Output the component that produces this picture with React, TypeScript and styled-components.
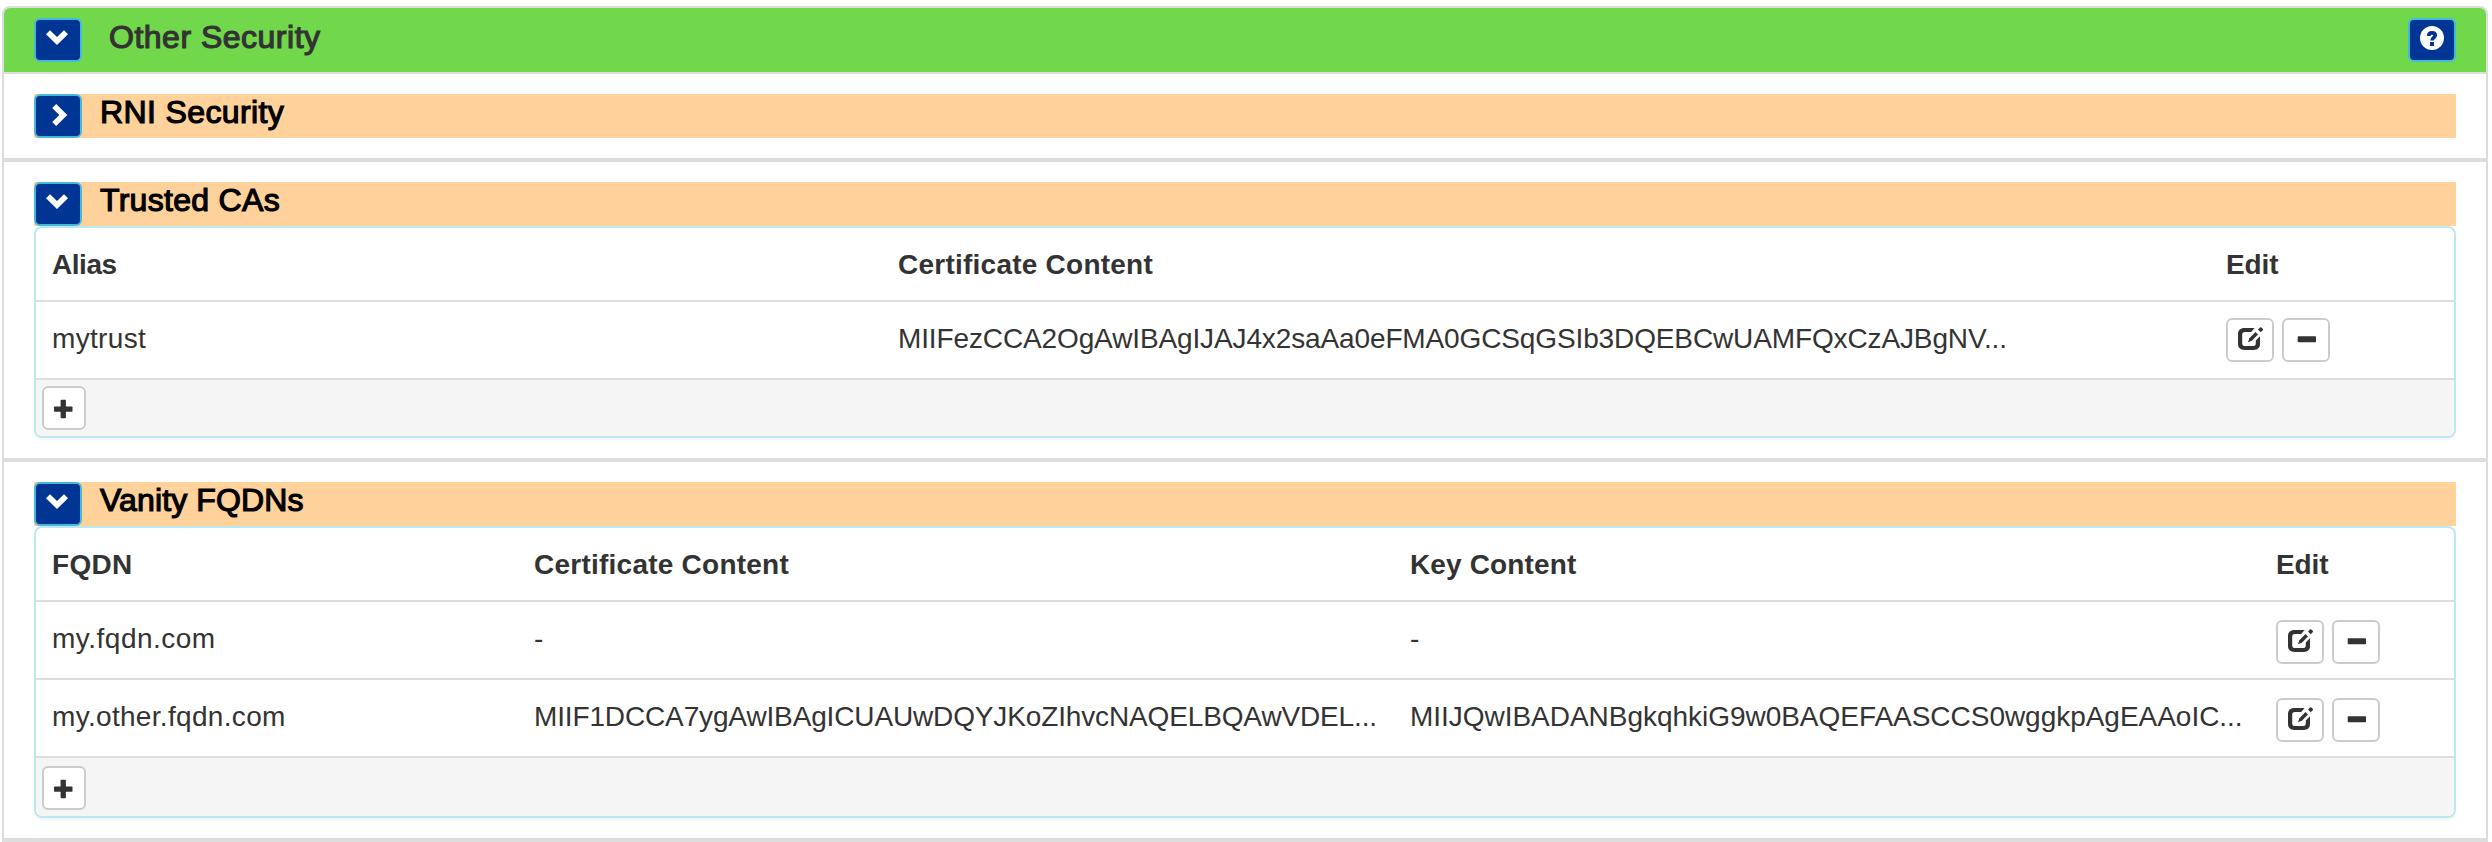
import React from "react";
import styled, { createGlobalStyle } from "styled-components";

const GlobalStyle = createGlobalStyle`
  *, *::before, *::after { box-sizing: border-box; }
  body {
    margin: 0;
    background: #fff;
    color: #333;
    font: 28px/40px "Liberation Sans", Arial, sans-serif;
  }
`;

const Panel = styled.main`
  width: 2486px;
  height: 836px;
  margin: 6px 0 0 2px;
  border: 2px solid #ddd;
  border-bottom: 0;
  border-radius: 8px 8px 0 0;
  overflow: hidden;
`;

const PanelHeading = styled.header`
  display: flex;
  align-items: flex-start;
  height: 66px;
  padding: 10px 30px 0;
  border-bottom: 2px solid #ddd;
  background: #71d84b;
`;

const Title = styled.h3<{ $spacing: number }>`
  margin: 0;
  font-size: 32px;
  line-height: 36px;
  font-weight: 400;
  letter-spacing: ${(p) => p.$spacing}px;
  -webkit-text-stroke: 1.2px currentColor;
  white-space: nowrap;
`;

const PanelTitle = styled(Title)`
  flex: 1;
  margin: 1px 0 0 27px;
  color: #333;
`;

const SectionTitle = styled(Title)`
  margin: 0 0 0 18px;
  color: #000;
`;

const Section = styled.section`
  padding: 20px 30px;
  border-bottom: 4px solid #ddd;
`;

const SectionBar = styled.div`
  display: flex;
  align-items: flex-start;
  height: 44px;
  background: #ffd29c;
`;

const Button = styled.button`
  display: block;
  flex: none;
  width: 48px;
  height: 44px;
  padding: 0;
  border: 2px solid #ccc;
  border-radius: 6px;
  background: #fff;
  color: #333;
`;

const InfoButton = styled(Button)`
  border-color: #46b8da;
  background: #003594;
  color: #fff;
`;

const AddButton = styled(Button)`
  width: 44px;
`;

const Icon = styled.svg`
  display: block;
  margin: -2px;
  overflow: visible;
`;

const TablePanel = styled.div`
  border: 2px solid #bce8f1;
  border-radius: 8px;
  overflow: hidden;
  box-shadow: 0 2px 2px rgba(0, 0, 0, 0.05);
`;

const Row = styled.div<{ $columns: string }>`
  display: grid;
  grid-template-columns: ${(p) => p.$columns};
  height: 78px;
  border-bottom: 2px solid #ddd;
`;

const HeadRow = styled(Row)`
  height: 74px;
  font-weight: 700;
`;

const Cell = styled.div<{ $spacing?: number }>`
  padding: 17px 0 0 16px;
  letter-spacing: ${(p) => p.$spacing ?? 0}px;
  white-space: nowrap;
`;

const Actions = styled.div<{ $top: number }>`
  display: flex;
  gap: 8px;
  padding: ${(p) => p.$top}px 0 0 16px;
`;

const TableFooter = styled.footer<{ $top: number }>`
  padding: ${(p) => p.$top}px 6px 6px;
  background: #f5f5f5;
`;

const ChevronDown = () => (
  <Icon width="48" height="44" viewBox="0 0 48 44">
    <path fill="currentColor" d="M12 16.3 16 12.3 23 19 30 12.3 34 16.3 23 27Z" />
  </Icon>
);

const ChevronRight = () => (
  <Icon width="48" height="44" viewBox="0 0 48 44">
    <path fill="currentColor" d="M18.2 14 22.2 10 33.3 21 22.2 32 18.2 28 25.3 21Z" />
  </Icon>
);

const HelpIcon = () => (
  <Icon width="48" height="44" viewBox="0 0 48 44">
    <circle cx="24" cy="20" r="12" fill="currentColor" />
    <path
      fill="none"
      stroke="#003594"
      strokeWidth="3.7"
      d="M20.8 18C20.8 15.6 22 14.8 24 14.8 26 14.8 27.2 15.8 27.2 17.3 27.2 19.6 24 19.6 24 22.6"
    />
    <rect x="22" y="24" width="4" height="4" fill="#003594" />
  </Icon>
);

const EditIcon = () => (
  <Icon width="48" height="44" viewBox="0 0 48 44">
    <path
      fill="currentColor"
      d="M18.5 10H28.6L25.2 14H19C17 14 16.2 14.9 16.2 16.8V25.2C16.2 27.1 17 28 19 28H27C29 28 29.8 27.1 29.8 25.2V22.4L34 18.3V25.8C34 29.8 31.7 32 27.8 32H18.5C14.4 32 12 29.8 12 25.8V16.2C12 12.2 14.4 10 18.5 10Z"
    />
    <path fill="currentColor" d="M22 24.3 23.4 20.3 29.5 14.1 32 16.6 25.8 22.7Z" />
    <path
      fill="currentColor"
      d="M32 11.6 34 9.5Q34.7 8.8 35.4 9.5L36.7 10.8Q37.4 11.5 36.7 12.2L34.7 14.3Z"
    />
  </Icon>
);

const MinusIcon = () => (
  <Icon width="48" height="44" viewBox="0 0 48 44">
    <rect x="15.7" y="18.2" width="18.3" height="6" rx="0.8" fill="currentColor" />
  </Icon>
);

const PlusIcon = () => (
  <Icon width="44" height="44" viewBox="0 0 44 44">
    <rect x="12" y="20.4" width="18.5" height="5.4" rx="0.8" fill="currentColor" />
    <rect x="18.6" y="13.7" width="5.3" height="18.5" rx="0.8" fill="currentColor" />
  </Icon>
);

interface TextCell {
  text: string;
  spacing?: number;
}

interface CertTableProps {
  columns: string;
  head: TextCell[];
  rows: TextCell[][];
  actionsTop: number;
  footerTop: number;
}

const CertTable = ({ columns, head, rows, actionsTop, footerTop }: CertTableProps) => (
  <TablePanel>
    <HeadRow $columns={columns}>
      {head.map((c) => (
        <Cell key={c.text} $spacing={c.spacing}>
          {c.text}
        </Cell>
      ))}
    </HeadRow>
    {rows.map((row) => (
      <Row key={row[0].text} $columns={columns}>
        {row.map((c, i) => (
          <Cell key={i} $spacing={c.spacing}>
            {c.text}
          </Cell>
        ))}
        <Actions $top={actionsTop}>
          <Button aria-label="Edit">
            <EditIcon />
          </Button>
          <Button aria-label="Remove">
            <MinusIcon />
          </Button>
        </Actions>
      </Row>
    ))}
    <TableFooter $top={footerTop}>
      <AddButton aria-label="Add">
        <PlusIcon />
      </AddButton>
    </TableFooter>
  </TablePanel>
);

interface SectionHeaderProps {
  title: string;
  spacing: number;
  open?: boolean;
}

const SectionHeader = ({ title, spacing, open = false }: SectionHeaderProps) => (
  <SectionBar>
    <InfoButton aria-label="Toggle section">{open ? <ChevronDown /> : <ChevronRight />}</InfoButton>
    <SectionTitle $spacing={spacing}>{title}</SectionTitle>
  </SectionBar>
);

const trustedHead: TextCell[] = [
  { text: "Alias", spacing: -0.45 },
  { text: "Certificate Content", spacing: 0.24 },
  { text: "Edit", spacing: -0.1 },
];

const trustedRows: TextCell[][] = [
  [
    { text: "mytrust", spacing: 0.33 },
    {
      text: "MIIFezCCA2OgAwIBAgIJAJ4x2saAa0eFMA0GCSqGSIb3DQEBCwUAMFQxCzAJBgNV...",
      spacing: -0.125,
    },
  ],
];

const vanityHead: TextCell[] = [
  { text: "FQDN", spacing: 0.3 },
  { text: "Certificate Content", spacing: 0.24 },
  { text: "Key Content", spacing: 0.14 },
  { text: "Edit", spacing: -0.1 },
];

const vanityRows: TextCell[][] = [
  [{ text: "my.fqdn.com", spacing: 0.5 }, { text: "-" }, { text: "-" }],
  [
    { text: "my.other.fqdn.com", spacing: 0.32 },
    { text: "MIIF1DCCA7ygAwIBAgICUAUwDQYJKoZIhvcNAQELBQAwVDEL...", spacing: -0.14 },
    { text: "MIIJQwIBADANBgkqhkiG9w0BAQEFAASCCS0wggkpAgEAAoIC...", spacing: -0.03 },
  ],
];

export default function App() {
  return (
    <>
      <GlobalStyle />
      <Panel>
        <PanelHeading>
          <InfoButton aria-label="Toggle panel">
            <ChevronDown />
          </InfoButton>
          <PanelTitle $spacing={0.5}>Other Security</PanelTitle>
          <InfoButton aria-label="Help">
            <HelpIcon />
          </InfoButton>
        </PanelHeading>
        <Section>
          <SectionHeader title="RNI Security" spacing={0.38} />
        </Section>
        <Section>
          <SectionHeader title="Trusted CAs" spacing={0.3} open />
          <CertTable
            columns="846px 1328px 1fr"
            head={trustedHead}
            rows={trustedRows}
            actionsTop={16}
            footerTop={6}
          />
        </Section>
        <Section>
          <SectionHeader title="Vanity FQDNs" spacing={0.12} open />
          <CertTable
            columns="482px 876px 866px 1fr"
            head={vanityHead}
            rows={vanityRows}
            actionsTop={18}
            footerTop={8}
          />
        </Section>
      </Panel>
    </>
  );
}
